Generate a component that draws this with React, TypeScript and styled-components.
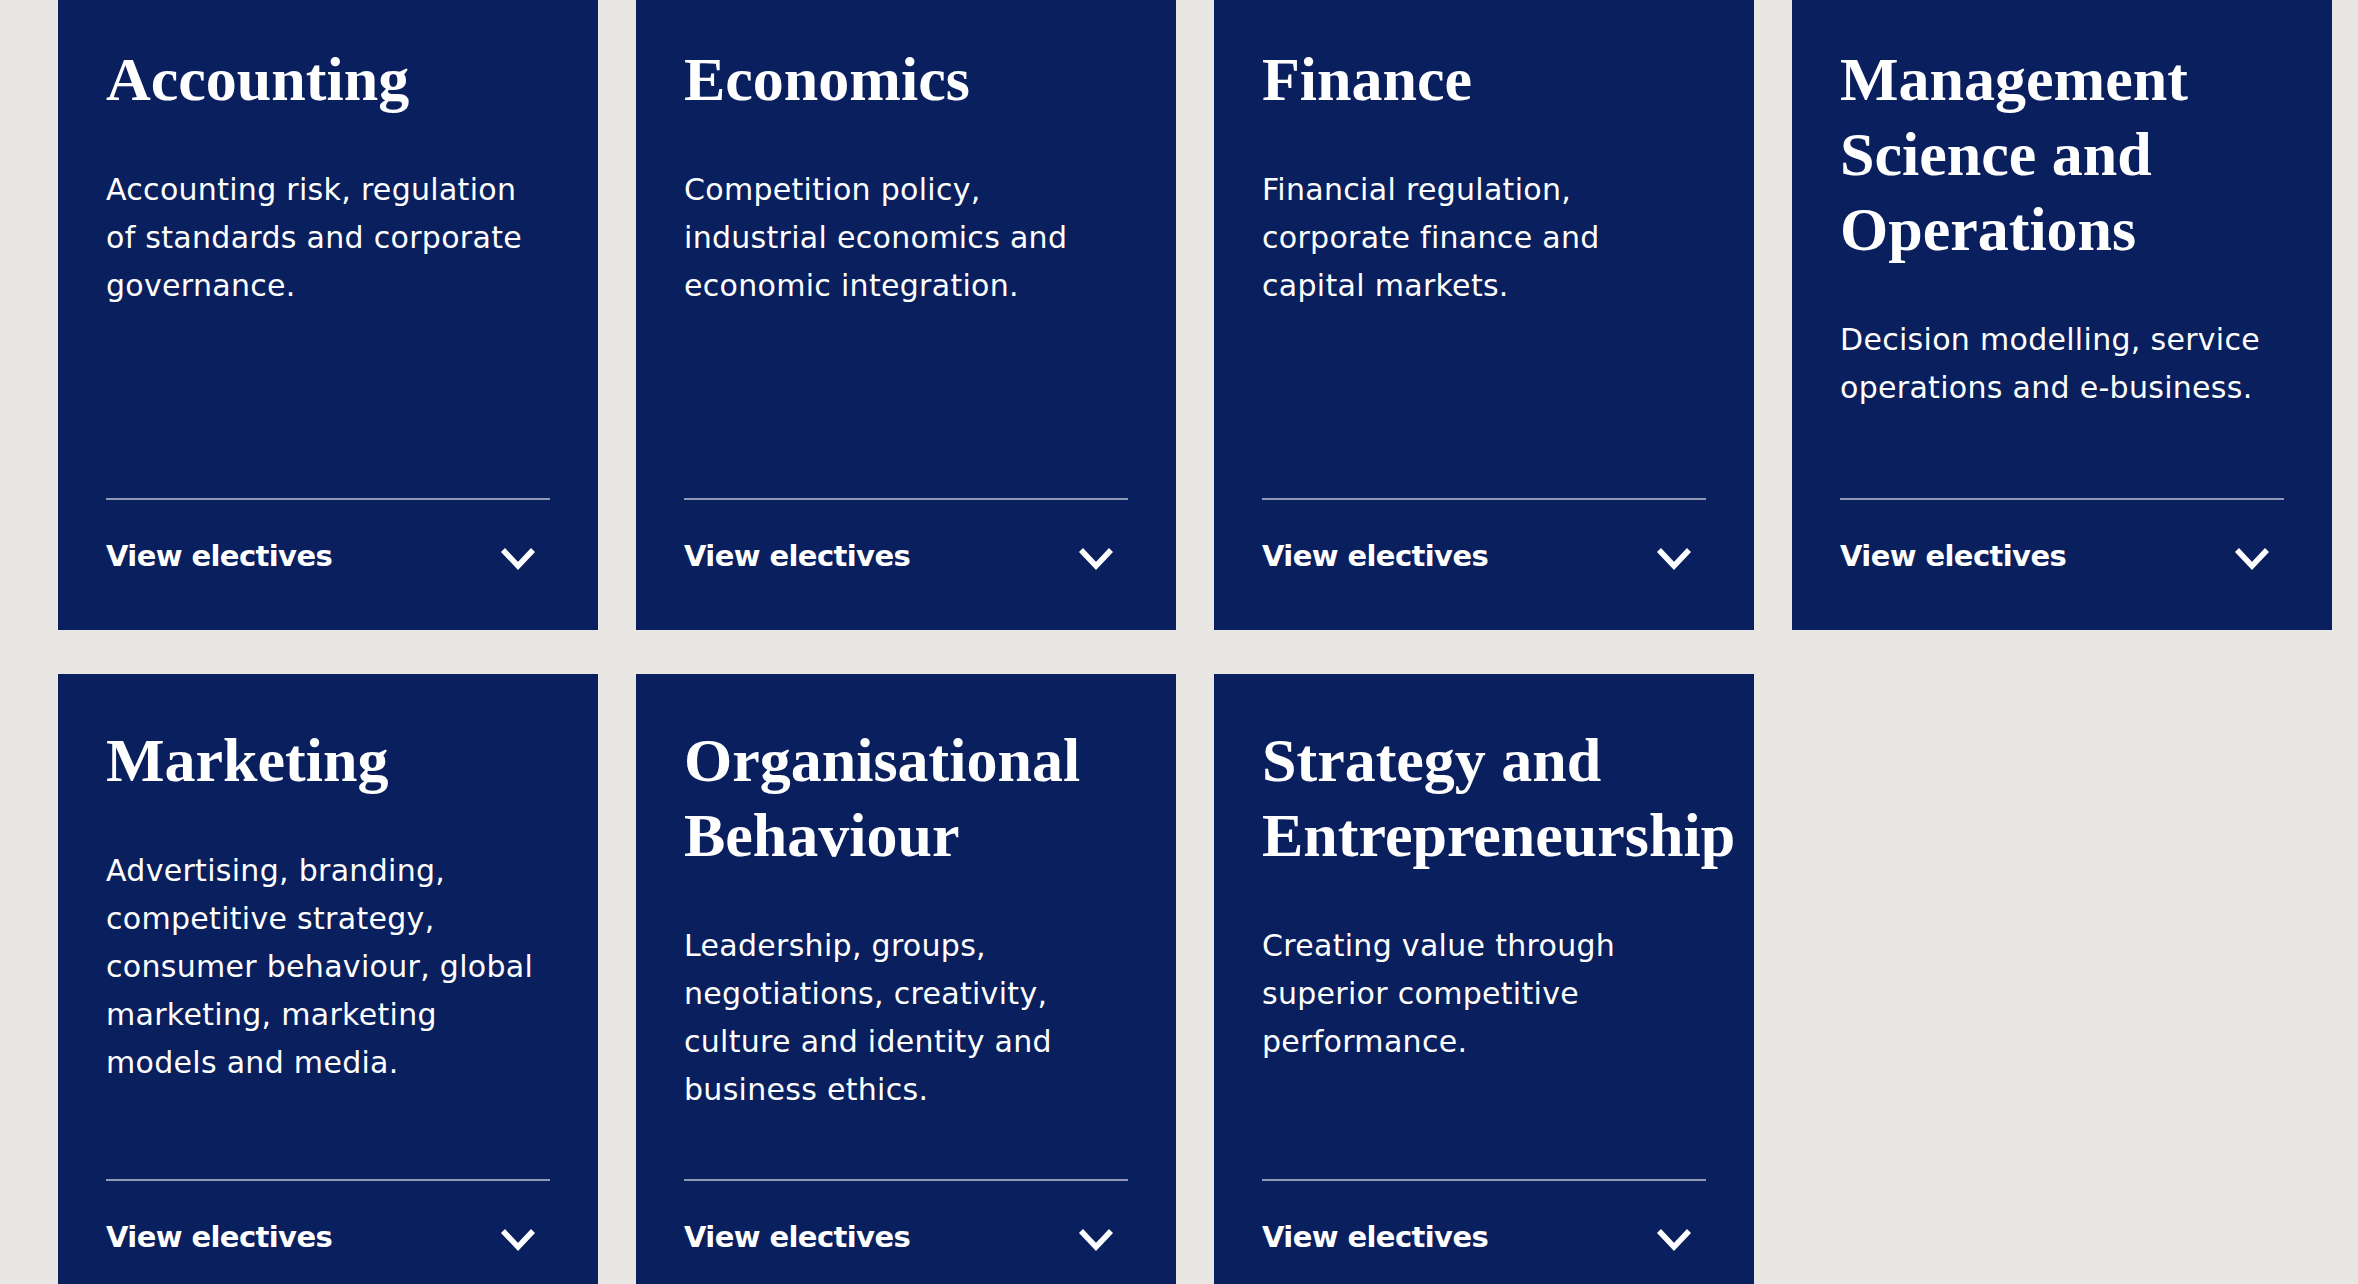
import React from "react";
import styled, { createGlobalStyle } from "styled-components";

const GlobalStyle = createGlobalStyle`
  html, body {
    margin: 0;
    padding: 0;
    background: #e9e7e3;
    overflow: hidden;
  }
  * { box-sizing: border-box; }
`;

const Page = styled.main`
  width: 2358px;
  height: 1284px;
  overflow: hidden;
  background: #e9e7e3;
  padding: 0 26px 0 58px;
`;

const Grid = styled.div`
  display: grid;
  grid-template-columns: repeat(4, 540px);
  grid-auto-rows: 637px;
  column-gap: 38px;
  row-gap: 44px;
  margin-top: -7px;
`;

const Card = styled.article`
  display: flex;
  flex-direction: column;
  background: #0a1f5e;
  color: #ffffff;
  padding: 49px 48px 0;
`;

const Title = styled.h2`
  margin: 0;
  font-family: "Liberation Serif", "Times New Roman", serif;
  font-weight: 700;
  font-size: 62px;
  line-height: 75px;
  color: #ffffff;
`;

const Description = styled.p`
  margin: 49px 0 0;
  max-width: 440px;
  font-family: "DejaVu Sans", Verdana, sans-serif;
  font-weight: 400;
  font-size: 30px;
  line-height: 48px;
  letter-spacing: 0.3px;
  color: #ffffff;
`;

const Footer = styled.button`
  margin-top: auto;
  display: flex;
  align-items: center;
  justify-content: space-between;
  width: 100%;
  background: transparent;
  border: none;
  border-top: 2px solid rgba(255, 255, 255, 0.55);
  padding: 38px 14px 56px 0;
  color: #ffffff;
  font-family: "DejaVu Sans", Verdana, sans-serif;
  font-weight: 700;
  font-size: 29px;
  line-height: 36px;
  letter-spacing: -0.6px;
  text-align: left;
  cursor: pointer;
`;

const Chevron = styled.svg`
  width: 36px;
  height: 28px;
  margin-top: 6px;
  flex: none;
`;

type Area = { title: string; description: string };

const areas: Area[] = [
  { title: "Accounting", description: "Accounting risk, regulation of standards and corporate governance." },
  { title: "Economics", description: "Competition policy, industrial economics and economic integration." },
  { title: "Finance", description: "Financial regulation, corporate finance and capital markets." },
  { title: "Management Science and Operations", description: "Decision modelling, service operations and e-business." },
  { title: "Marketing", description: "Advertising, branding, competitive strategy, consumer behaviour, global marketing, marketing models and media." },
  { title: "Organisational Behaviour", description: "Leadership, groups, negotiations, creativity, culture and identity and business ethics." },
  { title: "Strategy and Entrepreneurship", description: "Creating value through superior competitive performance." },
];

export default function App() {
  return (
    <>
      <GlobalStyle />
      <Page>
        <Grid>
          {areas.map((a) => (
            <Card key={a.title}>
              <Title>{a.title}</Title>
              <Description>{a.description}</Description>
              <Footer type="button">
                <span>View electives</span>
                <Chevron viewBox="0 0 36 28" aria-hidden="true">
                  <polyline points="3,5 18,21 33,5" fill="none" stroke="#ffffff" strokeWidth="5.5" />
                </Chevron>
              </Footer>
            </Card>
          ))}
        </Grid>
      </Page>
    </>
  );
}
